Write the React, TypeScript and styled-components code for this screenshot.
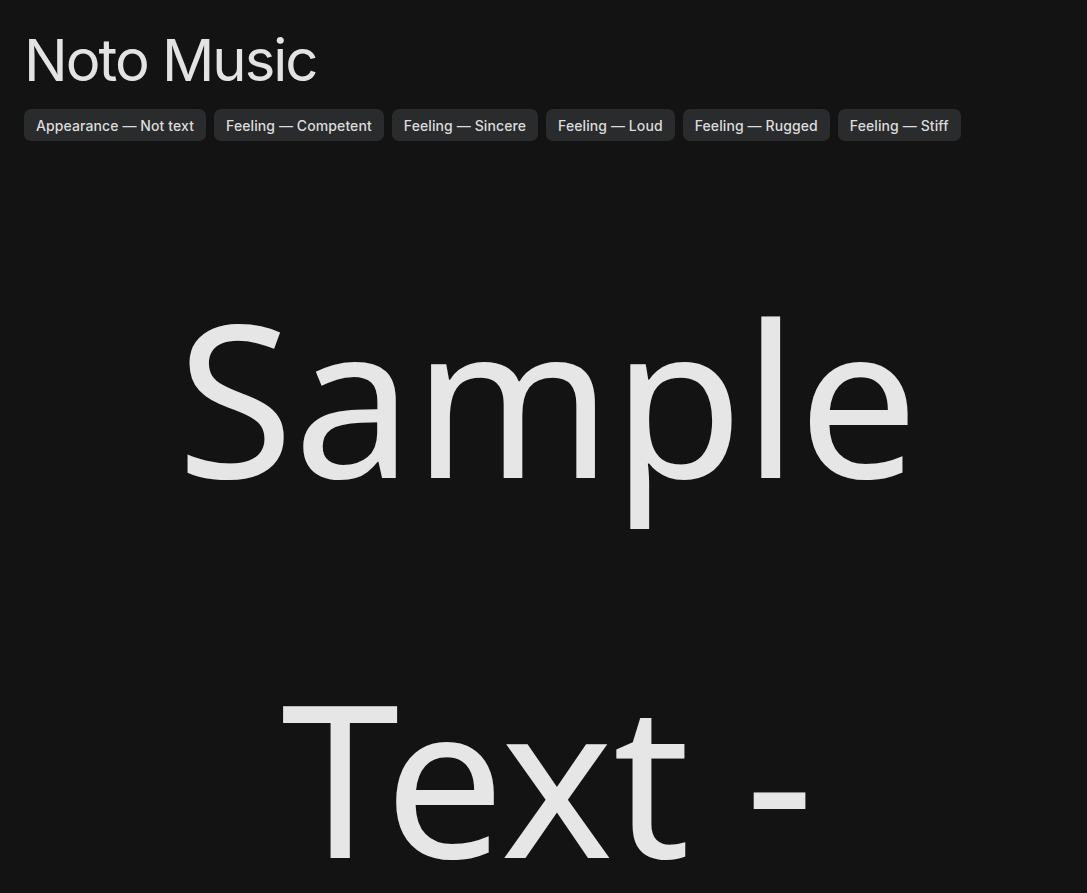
import React from "react";
import styled, { createGlobalStyle } from "styled-components";

const Global = createGlobalStyle`
  html, body { margin: 0; padding: 0; background: #131313; overflow: hidden; }
  body { font-family: Inter, "Noto Sans", sans-serif; color: #e3e3e3; }
`;

const Page = styled.main`
  display: flex;
  flex-direction: column;
  padding: 24px 24px 0 24px;
  height: 893px;
  box-sizing: border-box;
  overflow: hidden;
`;

const Title = styled.h1`
  margin: 0;
  font-family: Inter, "Noto Sans", sans-serif;
  font-weight: 400;
  font-size: 58px;
  line-height: 72px;
  letter-spacing: -2px;
  color: #e3e3e3;
`;

const Chips = styled.div`
  display: flex;
  flex-wrap: wrap;
  gap: 8px;
  margin-top: 13px;
`;

const Chip = styled.span`
  display: inline-flex;
  align-items: center;
  height: 32px;
  padding: 0 12px;
  border-radius: 7px;
  background: #2a2b2d;
  color: #dcdcdc;
  font-family: Inter, "Noto Sans", sans-serif;
  font-size: 14px;
  font-weight: 500;
  letter-spacing: 0.1px;
`;

const Sample = styled.p`
  margin: 64px 0 0 0;
  padding-left: 8px;
  text-align: center;
  font-family: "Noto Sans", sans-serif;
  font-weight: 400;
  font-size: 213px;
  line-height: 380px;
  color: #e6e6e6;
`;

const chips = [
  "Appearance — Not text",
  "Feeling — Competent",
  "Feeling — Sincere",
  "Feeling — Loud",
  "Feeling — Rugged",
  "Feeling — Stiff",
];

export default function App() {
  return (
    <>
      <Global />
      <Page>
        <Title>Noto Music</Title>
        <Chips>
          {chips.map((c) => (
            <Chip key={c}>{c}</Chip>
          ))}
        </Chips>
        <Sample>Sample Text - Noto Music</Sample>
      </Page>
    </>
  );
}
